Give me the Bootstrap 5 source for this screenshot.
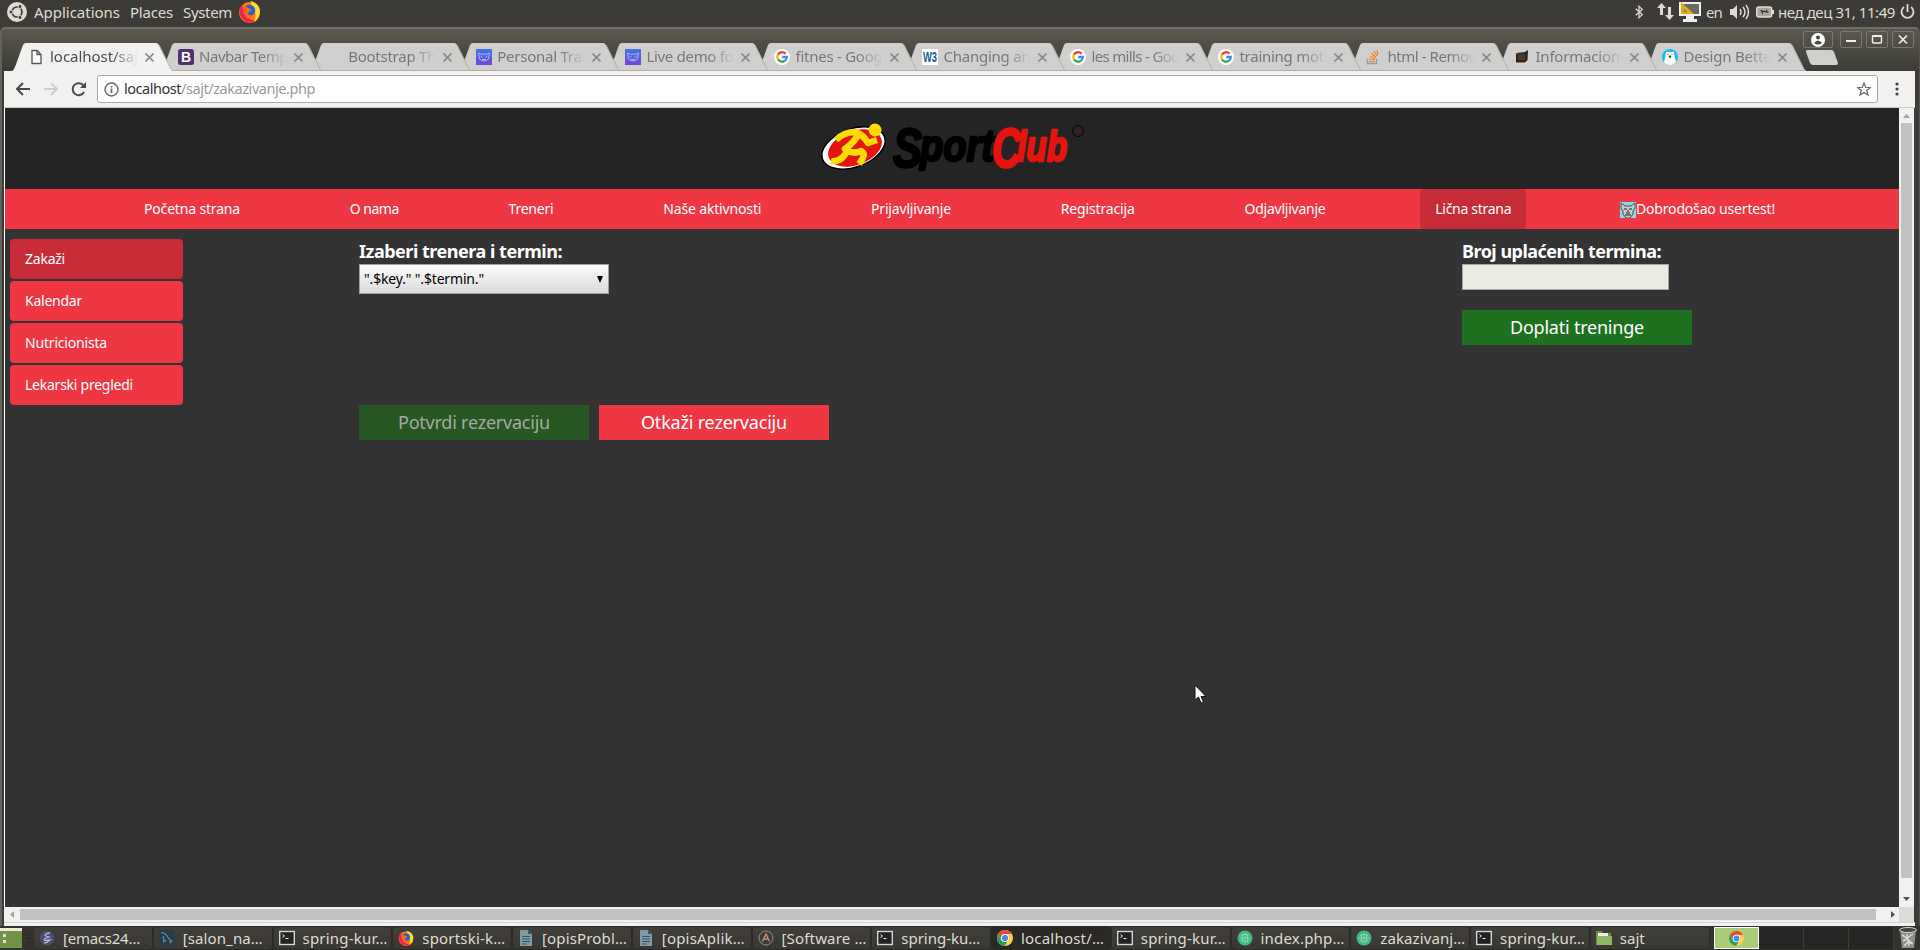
<!DOCTYPE html>
<html lang="sr">
<head>
<meta charset="utf-8">
<title>localhost/sajt/zakazivanje.php</title>
<link href="https://cdn.jsdelivr.net/npm/bootstrap@5.3.0/dist/css/bootstrap.min.css" rel="stylesheet">
<style>
body{font-family:"Noto Sans","Open Sans",sans-serif;font-size:14px;line-height:1.2;width:1920px;height:950px;background:#3c3b37}
svg{display:block;flex:none}
[data-w]{white-space:pre;display:inline-block}
.top-panel{height:26px;color:#dfdbd2;font-size:15px;padding-bottom:3px;flex:none}
.win{height:899px;border:1px solid #75736b;border-width:2px 1px 0 1px;border-top-color:#706f66;border-left:2px solid #64635b;border-right-color:#55534b;border-radius:5px 5px 0 0;background:linear-gradient(#5a584f,#3c3b37 42px);padding:0 4px 0 2px;flex:none;margin-top:1px}
.strip{height:42px;padding-top:14px;padding-left:8px}
.btab{width:148px;height:28px;padding-left:17px;color:#777;font-size:15px}
.btab:nth-child(-n+5){width:149.1px}
.btab>.shape{left:0;top:0;z-index:-1}
.tname{width:88px;height:20px;overflow:hidden;-webkit-mask-image:linear-gradient(90deg,#000 62px,transparent 88px);mask-image:linear-gradient(90deg,#000 62px,transparent 88px);margin-left:5px}
.wbtns{right:6px;top:31px}
.wbtn{width:22px;height:17px;border:1px solid #79776d;border-radius:2px}
.tools{height:37px;background:#f2f1f0;border-bottom:1px solid #ccc9c7;padding:4px 4px 4px 12px}
.omni{height:28px;border:1px solid #acaaa8;border-radius:3px;background:#fff;font-size:14.5px;width:1781px;margin-left:10px;padding:0 6px}
.pageview{background:#333;border-left:1px solid #fff}
.brandbar{height:81px;background:#242424}
.mainnav{height:40px;background:#ee3742;padding-left:124px;gap:79.75px}
.mainnav a,.side a{color:#fff;text-decoration:none;height:40px;padding:0 15px;border-radius:4px;display:flex;align-items:center}
.mainnav a.on,.side a.on{background:#c82d37}
.side{width:173px;gap:2px;margin:10px 0 0 5px}
.side a{background:#ee3742}
.lab{font-size:18px;font-weight:700;color:#fff;line-height:25px;height:25px}
.sel{width:250px;height:30px;border:1px solid #a0a0a0;background:linear-gradient(#fafafa,#dcdcdc);color:#000;padding:0 5px 0 4px}
.inp{width:207px;height:26px;border:1px solid #a6a6a6;background:#ebebe4}
.act{width:230px;height:35px;color:#fff;font-size:18px;border:0;border-radius:0;padding:0}
.vbar{width:15px;background:#f1f1f1}
.hbar{height:15px;background:#f1f1f1}
.thumb{background:#c1c1c1}
.taskbar{height:24px;font-size:15px;color:#dfdbd2;background:#34332f;flex:none;overflow:hidden}
.task{width:119.75px;height:24px;border:1px solid #2b2a27;border-radius:4px;background:linear-gradient(#403f3a,#383733);padding-left:5px}
.task.cur{background:#2a2926}
.task span{margin-left:8px}
.cell{width:45px;height:22px;background:#272624;border-right:1px solid #3b3a36}
.cell.sel-cell{background:#aacb78;border:1px solid #fff}
.pointer{left:1194px;top:684px}
</style>
</head>
<body class="d-flex flex-column overflow-hidden m-0 position-relative">
<svg width="0" height="0" class="position-absolute"><defs>
<symbol id="i-ff" viewBox="0 0 22 22"><circle cx="11" cy="12" r="10" fill="#ff7a1a"/><path d="M2 7Q0 14 5 19q6 5 12 1-9-1-11-8Q4 9 5 5z" fill="#f1224f"/><path d="M12 1q8 2 9 9 0 8-6 11 3-5 1-10-3-4-4-10z" fill="#ffdf2e"/><circle cx="11" cy="10" r="5.500" fill="#2464c8"/><path d="M5 7q3-1 5 1l3 1-2 2-2 2q3 3 7 0-2 5-7 4-5-3-4-10z" fill="#ff6a1a"/></symbol>
<symbol id="i-g" viewBox="0 0 16 16"><circle cx="8" cy="8" r="8" fill="#fff"/><g fill="none" stroke-width="2.300"><path d="M11.600 4.800A4.800 4.800 0 0 0 3.900 5.600" stroke="#ea4335"/><path d="M3.900 5.600a4.800 4.800 0 0 0 0 4.800" stroke="#fbbc05"/><path d="M3.900 10.400a4.800 4.800 0 0 0 7.200 1.200" stroke="#34a853"/><path d="M11.100 11.600A4.800 4.800 0 0 0 12.800 8H8.200" stroke="#4285f4"/></g></symbol>
<symbol id="i-page" viewBox="0 0 16 16"><path d="M3 1.500h5l4 4v9H3zM8 1.500v4h4" fill="#fff" stroke="#555" stroke-width="1.300"/></symbol>
<symbol id="i-b" viewBox="0 0 16 16"><rect width="16" height="16" rx="2.500" fill="#50336e"/><text x="8" y="13" text-anchor="middle" font-family="Liberation Sans" font-weight="700" font-size="14" fill="#fff">B</text></symbol>
<symbol id="i-cat" viewBox="0 0 16 16"><linearGradient id="cg" x2="0" y2="1"><stop stop-color="#3977e8"/><stop offset="1" stop-color="#7346d4"/></linearGradient><rect width="16" height="16" fill="url(#cg)"/><path d="M2.500 4l3 1.200h5l3-1.200-1 6q-4.500 4-9 0zM4.500 7l2 1.500M11.500 7l-2 1.500M6 10.500h4" fill="none" stroke="#a9b5fa" stroke-width="1"/></symbol>
<symbol id="i-w3" viewBox="0 0 16 16"><rect width="16" height="16" fill="#fff"/><text x="1" y="13" textLength="14" lengthAdjust="spacingAndGlyphs" font-family="Liberation Sans" font-weight="700" font-size="14" fill="#155b9e">W3</text></symbol>
<symbol id="i-so" viewBox="0 0 16 16"><path d="M1.500 10v4.500h9V10" fill="none" stroke="#999" stroke-width="1.300"/><path d="M3 12.500h6M3 10l6 .7M3.800 7.300l5.500 2M5.500 4.500l4.500 3.800M8 2l3 5M11 1l.8 5" stroke="#f48024" stroke-width="1.200"/></symbol>
<symbol id="i-blk" viewBox="0 0 16 16"><path d="M2 4l9-1 3-2-.5 10-2 2H2z" fill="#292420"/><path d="M4 5l7-.5V11H4z" fill="#403e3c"/><path d="M1.500 4.500h2M2 13.500h9" stroke="#b87333" stroke-width="1"/></symbol>
<symbol id="i-bear" viewBox="0 0 16 16"><circle cx="8" cy="8" r="8" fill="#17bdec"/><path d="M4 4q0-2 2-1h4q2-1 2 1l1 5 1 4q-2 3-6 3t-6-3l1-4z" fill="#fff"/><path d="M7 7h2l-1 2zM5.500 5.500h1M9.500 5.500h1" fill="#333" stroke="#333" stroke-width=".7"/></symbol>
<symbol id="i-term" viewBox="0 0 16 16"><rect x=".7" y="1.500" width="14.600" height="13" fill="#222" stroke="#d5d5d5" stroke-width="1.400"/><path d="M3.500 4.500l2 1.500-2 1.500M6.500 8.500h3" fill="none" stroke="#eee"/></symbol>
<symbol id="i-doc" viewBox="0 0 16 16"><path d="M2 0h8l4 4v12H2z" fill="#8599a3"/><path d="M10 0l4 4h-4z" fill="#285a78"/><path d="M4 6.500h8M4 9h8M4 11.500h8M4 14h5" stroke="#2b5870"/></symbol>
<symbol id="i-chr" viewBox="0 0 16 16"><circle cx="8" cy="8" r="8" fill="#ffce43"/><path d="M1.070 4A8 8 0 0 1 14.930 4H8a4 4 0 0 0-3.460 6z" fill="#e24a3b"/><path d="M1.070 4a8 8 0 0 0 6.500 12l3.500-6a4 4 0 0 1-6.530 0z" fill="#20a35c"/><circle cx="8" cy="8" r="4" fill="#fff"/><circle cx="8" cy="8" r="3.100" fill="#4587f2"/></symbol>
<symbol id="i-em" viewBox="0 0 16 16"><circle cx="8" cy="8" r="7.500" fill="#494b72"/><path d="M11 3q-7 1-4 3l3 1q-7 2-4 3.500 3 0 5-.5-3 3-6 3" fill="none" stroke="#b6b8c6" stroke-width="1.300"/></symbol>
<symbol id="i-my" viewBox="0 0 16 16"><rect width="16" height="16" rx="2" fill="#263b4b"/><path d="M2 3q4-1 6 3t5 5l-2 .5 1 2M4 6q1 3 1 6l2-2" fill="none" stroke="#718c9f" stroke-width="1.100"/></symbol>
<symbol id="i-su" viewBox="0 0 16 16"><circle cx="8" cy="8" r="7" fill="#3d3b39" stroke="#918e89"/><path d="M4.500 11.500L8 4l3.500 7.500M5.500 9h5" fill="none" stroke="#c08b71" stroke-width="1.500"/></symbol>
<symbol id="i-at" viewBox="0 0 16 16"><circle cx="8" cy="8" r="7.500" fill="#42b883"/><path d="M4 6q4-4 8 0M4 10q4 4 8 0M5.500 4v8M8 3v10M10.500 4v8M3 8h10" fill="none" stroke="#94e4bd" stroke-width=".7"/></symbol>
<symbol id="i-fold" viewBox="0 0 16 16"><path d="M0 1h6l1 2h8v12H0z" fill="#6f8f45"/><path d="M2 3h10v3H2z" fill="#eee"/><path d="M1 6h15v9H1z" fill="#91b765"/></symbol>
</defs></svg>

<header class="top-panel d-flex align-items-center">
  <svg width="20" height="20" viewBox="0 0 20 20" style="margin-left:7px;margin-top:1px"><circle cx="10" cy="10" r="10" fill="#dfdbd2"/><circle cx="10" cy="10" r="5" fill="none" stroke="#3c3b37" stroke-width="1.700"/><g fill="#3c3b37" stroke="#dfdbd2"><circle cx="4" cy="10" r="2"/><circle cx="13" cy="4.500" r="2"/><circle cx="13" cy="15.500" r="2"/></g></svg>
  <span data-w="86" style="margin-left:7px">Applications</span><span data-w="43" style="margin-left:10px">Places</span><span data-w="49" style="margin-left:10px">System</span>
  <svg width="23" height="23" style="margin-left:6px"><use href="#i-ff"/></svg>
  <div class="d-flex align-items-center ms-auto" style="padding-right:5px">
    <svg width="10" height="18" viewBox="0 0 12 18" style="margin-right:13px"><path d="M2 5l8 7-4 4V2l4 4-8 7" fill="none" stroke="#dfdbd2" stroke-width="1.500"/></svg>
    <svg width="17" height="17" viewBox="0 0 17 17" style="margin-right:5px"><path d="M0 5l4.500-5L9 5H6v7H3V5zM8 12l4.500 5 4.500-5h-3V4h-3v8z" fill="#dfdbd2"/></svg>
    <svg width="22" height="21" viewBox="0 0 22 21" style="margin-right:5px"><path d="M0 1h22v14H0zM7 15h8v3h3v3H4v-3h3z" fill="#eee"/><path d="M2 3h18v10H2z" fill="#686a66"/><path d="M2 1l13 12H2z" fill="#dcae12"/><path d="M5 8l3 3H5z" fill="#777"/></svg>
    <span data-w="16">en</span>
    <svg width="20" height="16" viewBox="0 0 20 16" style="margin:0 6px 0 8px"><path d="M0 5h3l4-4v14l-4-4H0z" fill="#dfdbd2"/><path d="M10 5q2 3 0 6M13 3q4 5 0 10M16 1q5 7 0 14" fill="none" stroke="#dfdbd2" stroke-width="1.500"/></svg>
    <svg width="18" height="12" viewBox="0 0 18 12" style="margin-right:4px"><rect x=".7" y="1" width="15" height="10" rx="2" fill="#aaa79f" stroke="#dfdbd2" stroke-width="1.400"/><path d="M16 4h2v4h-2z" fill="#dfdbd2"/><path d="M4 4l6 1V3l3 4-6-1v3z" fill="#3c3b37"/></svg>
    <span data-w="117">нед дец 31, 11:49</span>
    <svg width="15" height="16" viewBox="0 0 15 16" style="margin-left:5px"><path d="M4 3a6 6 0 1 0 7 0M7.500 0v8" fill="none" stroke="#dfdbd2" stroke-width="1.800"/></svg>
  </div>
</header>

<main class="win d-flex flex-column">
  <div class="strip d-flex position-relative" id="tabs" style="z-index:0"></div>
  <div class="wbtns position-absolute d-flex" style="gap:4px">
    <div class="wbtn d-flex align-items-center justify-content-center" style="width:30px;margin-right:3px"><svg width="14" height="14" viewBox="0 0 14 14"><circle cx="7" cy="7" r="7" fill="#fff"/><circle cx="7" cy="4.500" r="2" fill="#4c4a43"/><path d="M3 10q4-5 8 0-4 3-8 0z" fill="#4c4a43"/></svg></div>
    <div class="wbtn"><svg width="20" height="15"><path d="M5 9h10" stroke="#eee" stroke-width="2"/></svg></div>
    <div class="wbtn"><svg width="20" height="15"><rect x="5.500" y="4" width="9" height="7" rx="1" fill="none" stroke="#eee" stroke-width="1.500"/><path d="M5 4h10" stroke="#eee" stroke-width="2"/></svg></div>
    <div class="wbtn"><svg width="20" height="15"><path d="M6 3.500l8 8M14 3.500l-8 8" stroke="#eee" stroke-width="1.700"/></svg></div>
  </div>
  <div class="tools d-flex align-items-center">
    <svg width="71" height="16" viewBox="0 0 71 16" fill="none" stroke-width="2"><path d="M14 8H1M7 2L1 8l6 6" stroke="#4a4a4a"/><path d="M28 8h13M35 2l6 6-6 6" stroke="#cfcecd"/><path d="M68 11a6 6 0 1 1-.5-6.500" stroke="#4a4a4a"/><path d="M70 1v6h-6z" fill="#4a4a4a" stroke="none"/></svg>
    <div class="omni d-flex align-items-center">
      <svg width="15" height="15" viewBox="0 0 15 15"><circle cx="7.500" cy="7.500" r="6.500" fill="none" stroke="#666" stroke-width="1.400"/><path d="M7.500 6.500V11M7.500 4v1.500" stroke="#666" stroke-width="1.700"/></svg>
      <span data-w="57" style="margin-left:5px;color:#333">localhost</span><span data-w="134" style="color:#999">/sajt/zakazivanje.php</span>
      <svg class="ms-auto" width="14" height="14" viewBox="0 0 14 14"><path d="M7 1l1.700 4.300 4.500.3-3.500 2.900 1.200 4.500L7 10.500 3.100 13l1.200-4.500L.8 5.600l4.500-.3z" fill="none" stroke="#666" stroke-width="1.200"/></svg>
    </div>
    <svg width="4" height="14" style="margin-left:17px"><g fill="#444"><circle cx="2" cy="2" r="1.600"/><circle cx="2" cy="7" r="1.600"/><circle cx="2" cy="12" r="1.600"/></g></svg>
  </div>

  <div class="d-flex" style="height:799px;width:1910px">
    <div class="pageview flex-grow-1">
      <div class="brandbar">
        <svg class="mx-auto" width="340" height="81" viewBox="782 108 340 81">
          <ellipse cx="853.500" cy="148" rx="33" ry="19" transform="rotate(-20 853.500 148)" fill="#fff" stroke="#000" stroke-width="1.500"/>
          <ellipse cx="855" cy="148" rx="28" ry="17" transform="rotate(-20 855 148)" fill="#e5140e"/>
          <circle cx="875" cy="130" r="6.500" fill="#ffdc00"/>
          <path d="M836 140q8-8 19-8 8 2 13 11l9-3M858 134q-2 7-13 15 8 6 16 2 6 3-2 13M848 149q-6 14-17 12" fill="none" stroke="#ffdc00" stroke-width="6.500" stroke-linejoin="round"/>
          <g font-family="'Liberation Sans Narrow','Liberation Sans'" font-weight="700" font-style="italic" stroke-width="2.500" stroke-linejoin="round">
            <g fill="#000" stroke="#000"><text x="893" y="167" font-size="55" textLength="29" lengthAdjust="spacingAndGlyphs">S</text><text x="920" y="161" font-size="44" textLength="74" lengthAdjust="spacingAndGlyphs">port</text></g>
            <g fill="#e5140e" stroke="#e5140e"><text x="992" y="167" font-size="55" textLength="29" lengthAdjust="spacingAndGlyphs">C</text><text x="1017" y="161" font-size="43" textLength="50" lengthAdjust="spacingAndGlyphs">lub</text></g>
          </g>
          <circle cx="1078" cy="131" r="5.500" fill="none" stroke="#050505"/><text x="1078" y="134" font-size="8" text-anchor="middle" font-family="Liberation Sans" fill="#611">R</text>
        </svg>
      </div>
      <nav class="mainnav d-flex">
        <a href="#"><span data-w="96">Početna strana</span></a><a href="#"><span data-w="49">O nama</span></a><a href="#"><span data-w="45">Treneri</span></a><a href="#"><span data-w="98">Naše aktivnosti</span></a><a href="#"><span data-w="80">Prijavljivanje</span></a><a href="#"><span data-w="74">Registracija</span></a><a href="#"><span data-w="81">Odjavljivanje</span></a><a href="#" class="on"><span data-w="76">Lična strana</span></a>
        <a href="#" style="padding-left:14px"><svg width="16" height="16" viewBox="0 0 16 16" style="margin-top:2px"><path d="M0 0h16v16H0z" fill="#8ed5e5"/><path d="M1 1l4 3h6l4-3v5l-2 3v3l-3 4H6l-3-4V9L1 6z" fill="#c6cac8" stroke="#46504f"/><path d="M4 7h3M9 7h3M6 11h4M5 13h6M7 9h2" stroke="#222"/></svg><span data-w="139">Dobrodošao usertest!</span></a>
      </nav>
      <div class="d-flex">
        <nav class="side d-flex flex-column">
          <a href="#" class="on"><span data-w="40">Zakaži</span></a><a href="#"><span data-w="57">Kalendar</span></a><a href="#"><span data-w="82">Nutricionista</span></a><a href="#"><span data-w="108">Lekarski pregledi</span></a>
        </nav>
        <section style="margin:10px 0 0 176px;width:1103px">
          <div class="lab"><span data-w="203">Izaberi trenera i termin:</span></div>
          <div class="sel d-flex align-items-center justify-content-between"><span data-w="120">".$key." ".$termin."</span><svg width="6" height="7"><path d="M0 0h6L3 7z"/></svg></div>
          <div class="d-flex" style="gap:10px;margin-top:111px"><button class="btn act" style="background:#265723;color:#a3aaa2"><span data-w="152">Potvrdi rezervaciju</span></button><button class="btn act" style="background:#ee3742"><span data-w="146">Otkaži rezervaciju</span></button></div>
        </section>
        <section style="margin-top:10px">
          <div class="lab"><span data-w="199">Broj uplaćenih termina:</span></div>
          <div class="inp"></div>
          <button class="btn act d-block" style="background:#1e711e;margin-top:20px"><span data-w="134">Doplati treninge</span></button>
        </section>
      </div>
    </div>
    <div class="vbar d-flex flex-column align-items-center">
      <svg width="15" height="15"><path d="M4 10h7L7.500 6z" fill="#a3a3a3"/></svg>
      <div class="thumb" style="width:11px;height:755px"></div>
      <svg class="mt-auto" width="15" height="15"><path d="M4 5h7l-3.500 4z" fill="#505050"/></svg>
    </div>
  </div>
  <div class="hbar d-flex align-items-center" style="width:1910px">
    <svg width="16" height="15"><path d="M10 4v7L6 7.500z" fill="#a3a3a3"/></svg>
    <div class="thumb" style="width:1856px;height:11px"></div>
    <svg class="ms-auto" width="16" height="15"><path d="M8 4v7l4-3.500z" fill="#505050"/></svg>
    <div style="width:15px;height:15px;background:#dcdcdc"></div>
  </div>
  <div style="height:4px;background:#f2f1f0;border-top:1px solid #d5d2d2"></div>
</main>

<footer class="taskbar d-flex align-items-center">
  <svg width="33" height="24"><rect y="2" width="22" height="20" fill="#719346"/><path d="M0 2h22v3H0z" fill="#eee9da"/><path d="M3 8h3v3H3zM3 14h3v3H3z" fill="#ddd"/><path d="M27 8.500h4M27 12.500h4M27 16.500h4" stroke="#262522"/></svg>
  <div class="d-flex" id="tasks"></div>
  <div class="d-flex" style="margin-left:4px"><div class="cell sel-cell d-flex align-items-center justify-content-center"><svg width="15" height="15" viewBox="0 0 16 16"><use href="#i-chr"/></svg></div><div class="cell"></div><div class="cell"></div><div class="cell"></div></div>
  <svg width="18" height="22" viewBox="0 0 18 22" style="margin-left:5px"><path d="M1 3l2 18h12l2-18z" fill="#8c8e8c"/><ellipse cx="9" cy="3" rx="8.500" ry="2.500" fill="#444" stroke="#d0d2d0"/><path d="M3 8l5 3 6-4M4 14l4-2 5 4M5 19l4-4 5 2M8 7l2 12" fill="none" stroke="#d5d7d5" stroke-width="1.500"/></svg>
</footer>
<svg class="pointer position-absolute" width="13" height="20" viewBox="0 0 13 20"><path d="M1 1v15l3.500-3 2.500 6 2.500-1L7 12.500h5z" fill="#fff" stroke="#111"/></svg>

<script src="https://cdn.jsdelivr.net/npm/bootstrap@5.3.0/dist/js/bootstrap.bundle.min.js"></script>
<script>
// browser tabs: icon, title, title width
const tabs=[["page","localhost/saj",88],["b","Navbar Temp",89],["","Bootstrap Th",88],["cat","Personal Trai",88],["cat","Live demo fo",87],["g","fitnes - Goog",87],["w3","Changing an",87],["g","les mills - Goo",88],["g","training moti",88],["so","html - Remov",88],["blk","Informacioni",88],["bear","Design Bette",88]];
document.getElementById('tabs').innerHTML=tabs.map(([ic,t,w],i)=>`
<div class="btab position-relative d-flex align-items-center flex-shrink-0" style="z-index:${20-i}${i?'':';color:#4c4c4c'}">
<svg class="shape position-absolute" width="162" height="28" viewBox="0 0 162 28"><path d="M0 28Q2 27 3 24L11 2q1-2 3-2H144q2 0 3 2L158 24q1 3 3 4z" fill="${i?'#d1cfcd':'#f2f1f0'}"/><path d="M147 2L158 24q1 3 3 4${i?'M0 27.500h161':''}" fill="none" stroke="#b1afad"/></svg>
<svg width="16" height="16">${ic?`<use href="#i-${ic}"/>`:''}</svg>
<div class="tname"><span data-w="${w}">${t}</span></div>
<svg width="9" height="9" style="margin-left:7px"><path d="M.5 .5l8 8M8.500 .5l-8 8" stroke="#8b8a88" stroke-width="1.600"/></svg></div>`).join('')
+'<svg width="34" height="16" style="margin:7px 0 0 12px"><path d="M2 0h24q2 0 3 2l4 11q0 2-2 2H8q-2 0-3-2L1 2q0-2 1-2z" fill="#d1cfcd"/></svg>';
// taskbar windows
const tasks=[["em","[emacs24…",77],["my","[salon_na…",80],["term","spring-kur…",85],["ff","sportski-k…",83],["doc","[opisProbl…",85],["doc","[opisAplik…",83],["su","[Software …",85],["term","spring-ku…",79],["chr","localhost/…",83],["term","spring-kur…",85],["at","index.php…",84],["at","zakazivanj…",85],["term","spring-kur…",85],["fold","sajt",25]];
document.getElementById('tasks').innerHTML=tasks.map(([ic,t,w])=>`<div class="task d-flex align-items-center flex-shrink-0${ic=='chr'?' cur':''}"><svg width="16" height="16"><use href="#i-${ic}"/></svg><span data-w="${w}">${t}</span></div>`).join('');
// track each label to its intended width
document.querySelectorAll('[data-w]').forEach(e=>{const w=+e.dataset.w,n=e.textContent.length;e.style.letterSpacing=((w-e.getBoundingClientRect().width)/n)+'px'});
</script>
</body>
</html>
